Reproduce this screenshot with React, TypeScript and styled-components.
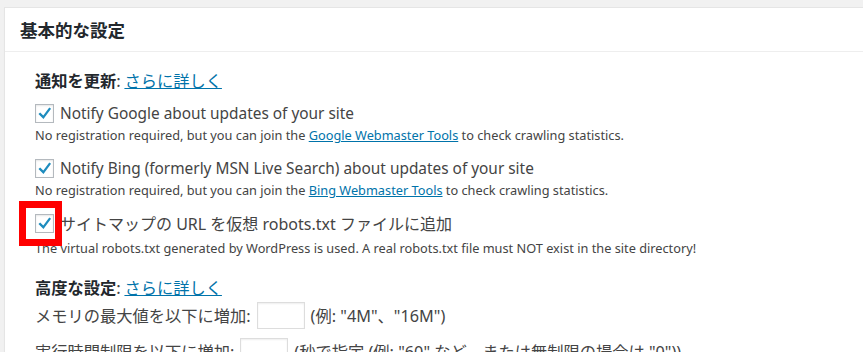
import styled, { createGlobalStyle } from 'styled-components';

const GlobalStyle = createGlobalStyle`
  html, body {
    margin: 0;
    padding: 0;
    background: #f1f1f1;
    overflow: hidden;
  }
  body {
    font-family: "Noto Sans", "Noto Sans CJK JP", sans-serif;
    color: #444;
  }
`;

const Panel = styled.div`
  margin: 7px -20px 0 4px;
  background: #fff;
  border: 1px solid #e5e5e5;
  box-shadow: 0 1px 1px rgba(0, 0, 0, 0.04);
  height: 400px;
`;

const Header = styled.h3`
  margin: 0;
  height: 43px;
  padding-left: 15px;
  display: flex;
  align-items: center;
  border-bottom: 1px solid #eee;
  font-size: 17.5px;
  font-weight: 700;
  color: #23282d;
  font-family: "Noto Sans CJK JP", sans-serif;
`;

const Body = styled.div`
  padding: 16px 0 0 30px;
`;

const SectionTitle = styled.div<{ $gap?: number }>`
  line-height: 24px;
  font-size: 16.25px;
  margin-top: ${(p) => p.$gap ?? 0}px;
  font-family: "Noto Sans CJK JP", sans-serif;
  b {
    font-weight: 700;
    color: #23282d;
  }
`;

const Link = styled.a`
  color: #0073aa;
  text-decoration: underline;
  cursor: pointer;
`;

const List = styled.ul`
  list-style: none;
  margin: 9px 0 0;
  padding: 0;
`;

const Item = styled.li`
  margin-bottom: 11px;
`;

const Label = styled.label<{ $size: number }>`
  display: flex;
  align-items: center;
  gap: 6px;
  height: 24px;
  font-size: ${(p) => p.$size}px;
  color: #444;
`;

const BoxWrap = styled.span`
  position: relative;
  display: inline-flex;
`;

const Box = styled.span`
  width: 19px;
  height: 19px;
  box-sizing: border-box;
  border: 1px solid #b4b9be;
  background: #fff;
  box-shadow: inset 0 1px 2px rgba(0, 0, 0, 0.1);
  display: inline-flex;
  align-items: center;
  justify-content: center;
`;

const Highlight = styled.span`
  position: absolute;
  left: -16px;
  top: -13px;
  width: 43px;
  height: 45px;
  box-sizing: border-box;
  border: 7px solid #f00;
  pointer-events: none;
`;

const Desc = styled.div<{ $push?: number }>`
  line-height: 20px;
  padding-top: ${(p) => p.$push ?? 0}px;
  font-size: 12.75px;
  color: #444;
`;

const Fields = styled.div`
  display: flex;
  flex-direction: column;
  gap: 4px;
`;

const FieldRow = styled.div`
  display: flex;
  align-items: center;
  height: 32px;
  font-size: 16.25px;
  gap: 6px;
  white-space: nowrap;
`;

const SmallInput = styled.span`
  width: 48px;
  height: 27px;
  flex: none;
  box-sizing: border-box;
  border: 1px solid #ddd;
  background: #fff;
  box-shadow: inset 0 1px 2px rgba(0, 0, 0, 0.07);
`;

const Check = () => (
  <svg width="19" height="19" viewBox="0 0 20 20" style={{ marginTop: -2 }}>
    <path d="M15.6 4.2 8.6 13.6 4.9 9.9 2.9 11.9l5.9 5.8 8.9-12z" fill="#1e8cbe" />
  </svg>
);

const Option = ({
  label,
  desc,
  marked,
}: {
  label: string;
  desc: React.ReactNode;
  marked?: boolean;
}) => (
  <Item>
    <Label $size={marked ? 16 : 15.4}>
      <BoxWrap>
        <Box>
          <Check />
        </Box>
        {marked && <Highlight />}
      </BoxWrap>
      {label}
    </Label>
    <Desc $push={marked ? 3 : 0}>{desc}</Desc>
  </Item>
);

export default function App() {
  return (
    <>
      <GlobalStyle />
      <Panel>
        <Header>基本的な設定</Header>
        <Body>
          <SectionTitle>
            <b>通知を更新</b>: <Link>さらに詳しく</Link>
          </SectionTitle>
          <List>
            <Option
              label="Notify Google about updates of your site"
              desc={
                <>
                  No registration required, but you can join the <Link>Google Webmaster Tools</Link> to check
                  crawling statistics.
                </>
              }
            />
            <Option
              label="Notify Bing (formerly MSN Live Search) about updates of your site"
              desc={
                <>
                  No registration required, but you can join the <Link>Bing Webmaster Tools</Link> to check
                  crawling statistics.
                </>
              }
            />
            <Option
              marked
              label="サイトマップの URL を仮想 robots.txt ファイルに追加"
              desc="The virtual robots.txt generated by WordPress is used. A real robots.txt file must NOT exist in the site directory!"
            />
          </List>
          <SectionTitle $gap={17}>
            <b>高度な設定</b>: <Link>さらに詳しく</Link>
          </SectionTitle>
          <Fields>
            <FieldRow>
              メモリの最大値を以下に増加: <SmallInput /> (例: "4M"、"16M")
            </FieldRow>
            <FieldRow>
              実行時間制限を以下に増加: <SmallInput /> (秒で指定 (例: "60" など、または無制限の場合は "0"))
            </FieldRow>
          </Fields>
        </Body>
      </Panel>
    </>
  );
}
